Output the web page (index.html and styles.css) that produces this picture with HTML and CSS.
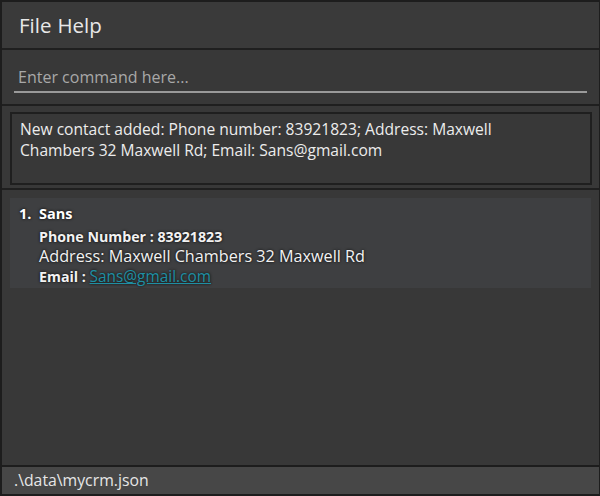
FILE: index.html
```html
<!DOCTYPE html>
<html>
<head>
<meta charset="utf-8">
<link rel="stylesheet" href="styles.css">
</head>
<body>
<div class="window">
  <div class="menubar">
    <span class="menu">File</span>
    <span class="menu">Help</span>
  </div>
  <div class="command">
    <div class="input">Enter command here...</div>
  </div>
  <div class="result">
    <div class="result-box">New contact added: Phone number: 83921823; Address: Maxwell Chambers 32 Maxwell Rd; Email: Sans@gmail.com</div>
  </div>
  <div class="list">
    <div class="card">
      <div class="name"><span class="idx">1.</span>Sans</div>
      <div class="field bold">Phone Number : 83921823</div>
      <div class="field addr">Address: Maxwell Chambers 32 Maxwell Rd</div>
      <div class="field bold">Email : <a class="link">Sans@gmail.com</a></div>
    </div>
  </div>
  <div class="status">.\data\mycrm.json</div>
</div>
</body>
</html>
```
FILE: styles.css
```css
html, body {
  margin: 0;
  padding: 0;
  background: #1d1d1d;
}
body {
  width: 600px;
  height: 496px;
  overflow: hidden;
  font-family: "Open Sans", "Noto Sans", sans-serif;
  color: #e6e6e6;
}
.window {
  width: 600px;
  height: 496px;
  box-sizing: border-box;
  border-top: 2px solid #1d1d1d;
  border-left: 2px solid #1d1d1d;
  border-right: 1px solid #1d1d1d;
  border-bottom: 2px solid #1d1d1d;
  display: flex;
  flex-direction: column;
  background: #383838;
}
.menubar {
  height: 48px;
  border-bottom: 2px solid #1f1f1f;
  background: #3a3a3a;
  display: flex;
  align-items: center;
  gap: 6px;
  padding-left: 17px;
  padding-bottom: 1px;
  box-sizing: border-box;
  font-size: 20.5px;
  color: #e8e8e8;
  flex: none;
}
.command {
  height: 56px;
  box-sizing: border-box;
  border-bottom: 2px solid #1f1f1f;
  padding: 16px 12px 0 12px;
  flex: none;
}
.input {
  border-bottom: 2px solid #9a9a9a;
  color: #a8a8a8;
  font-size: 16px;
  padding: 2px 0 5px 4px;
  line-height: 18px;
}
.result {
  height: 84px;
  box-sizing: border-box;
  border-bottom: 2px solid #1f1f1f;
  padding: 6px 7px 3px 8px;
  flex: none;
}
.result-box {
  height: 100%;
  box-sizing: border-box;
  border: 2px solid #1f1f1f;
  padding: 5px 60px 5px 8px;
  font-size: 15.6px;
  line-height: 21px;
  color: #ececec;
}
.list {
  flex: 1;
  padding: 8px 8px 0 8px;
}
.card {
  background: #3e3f41;
  padding: 5px 10px 2px 9px;
  height: 90px;
  box-sizing: border-box;
  text-shadow: 0 0 3px #000;
}
.name {
  font-weight: bold;
  font-size: 14.5px;
  line-height: 21px;
  color: #ffffff;
}
.idx {
  display: inline-block;
  width: 20px;
}
.field {
  padding-left: 20px;
  color: #f2f2f2;
}
.bold {
  font-weight: bold;
  font-size: 14.2px;
  line-height: 19px;
}
.field:nth-child(2) {
  margin-top: 3px;
}
.addr {
  font-size: 16.2px;
  line-height: 21px;
}
.link {
  color: #1f8fa3;
  text-decoration: underline;
  font-weight: normal;
  font-size: 15.4px;
  line-height: 19px;
}
.status {
  height: 27px;
  flex: none;
  border-top: 2px solid #1d1d1d;
  background: #474747;
  font-size: 15.8px;
  line-height: 27px;
  padding-left: 12px;
  color: #e6e6e6;
}
```
